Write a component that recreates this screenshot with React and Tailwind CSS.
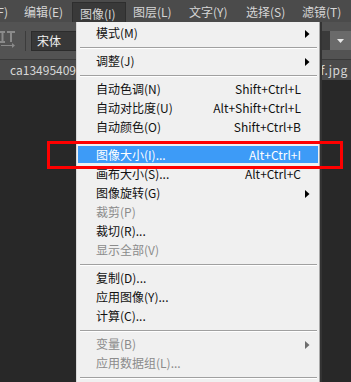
const items = [
  { t: '模式(M)', arrow: true },
  'sep',
  { t: '调整(J)', arrow: true },
  'sep',
  { t: '自动色调(N)', k: 'Shift+Ctrl+L' },
  { t: '自动对比度(U)', k: 'Alt+Shift+Ctrl+L' },
  { t: '自动颜色(O)', k: 'Shift+Ctrl+B' },
  'sep',
  { t: '图像大小(I)...', k: 'Alt+Ctrl+I', hi: true },
  { t: '画布大小(S)...', k: 'Alt+Ctrl+C' },
  { t: '图像旋转(G)', arrow: true },
  { t: '裁剪(P)', dis: true },
  { t: '裁切(R)...' },
  { t: '显示全部(V)', dis: true },
  'sep',
  { t: '复制(D)...' },
  { t: '应用图像(Y)...' },
  { t: '计算(C)...' },
  'sep',
  { t: '变量(B)', dis: true, arrow: true },
  { t: '应用数据组(L)...', dis: true },
  'sep',
];

function Arrow({ dis }) {
  return (
    <svg width="5" height="8" viewBox="0 0 5 8" className="absolute right-[9px] top-1/2 -translate-y-1/2">
      <path d="M0 0 L4.5 4 L0 8 Z" fill={dis ? '#6d6d6d' : '#000'} />
    </svg>
  );
}

function MenuRow({ it }) {
  if (it === 'sep') {
    return (
      <div className="h-[9px] flex flex-col">
        <div className="h-[4px]" />
        <div className="h-px bg-[#a0a0a0] ml-[2px] mr-[2px]" />
        <div className="h-px bg-white ml-[2px] mr-[2px]" />
      </div>
    );
  }
  const color = it.hi ? 'text-white' : it.dis ? 'text-[#8b8b8b]' : 'text-[#111]';
  return (
    <div className="h-[19px] relative">
      <div
        className={
          'absolute left-0 right-[1px] top-0 h-[17px] flex items-center justify-between pl-[18px] pr-[17px] ' +
          (it.hi ? 'bg-[#3d9bf7] ' : '') +
          color
        }
      >
        <span className="whitespace-nowrap leading-none">{it.t}</span>
        {it.k && <span className="whitespace-nowrap leading-none">{it.k}</span>}
      </div>
      {it.arrow && <Arrow dis={it.dis} />}
    </div>
  );
}

const barItems = [
  { t: '编辑(E)', w: 'w-[55px]' },
  { t: '图像(I)', w: 'w-[54px]', active: true },
  { t: '图层(L)', w: 'w-[56px]' },
  { t: '文字(Y)', w: 'w-[57px]' },
  { t: '选择(S)', w: 'w-[56px]' },
  { t: '滤镜(T)', w: 'w-[56px]' },
];

export default function App() {
  return (
    <div className="relative w-[351px] h-[382px] overflow-hidden bg-[#282828] text-[12px] font-['Noto_Sans_CJK_SC','Noto_Sans',sans-serif]">
      {/* menu bar */}
      <div className="h-[22px] bg-[#4b4b4b] flex text-[#d6d6d6]">
        <div className="w-[21px] flex justify-end items-center pr-[9px] pt-[2px] overflow-hidden">
          <span className="whitespace-nowrap">文件(F)</span>
        </div>
        {barItems.map((b) => (
          <div
            key={b.t}
            className={
              b.w +
              ' shrink-0 flex items-center pl-[7px] pt-[2px] whitespace-nowrap ' +
              (b.active ? 'bg-[#393939] border border-b-0 border-[#2e2e2e] mt-[2px] pt-0' : '')
            }
          >
            {b.t}
          </div>
        ))}
      </div>
      {/* options bar */}
      <div className="h-[38px] bg-[#535353] border-b border-[#3a3a3a] flex items-center">
        <svg width="18" height="20" viewBox="0 0 18 20" className="ml-[-1px] mt-[-4px]">
          <g stroke="#8a8a8a" strokeWidth="2" fill="none">
            <path d="M1 3 H6 M3.5 3 V13 M1 13 H6" />
            <path d="M8 3 H16 M12 3 V13" />
            <path d="M2 16.5 H14" strokeWidth="1" />
          </g>
          <path d="M13 14 L16 16.5 L13 19 Z" fill="#8a8a8a" />
        </svg>
        <div className="w-px h-[20px] bg-[#3c3c3c] ml-[8px] mr-[5px]" />
        <div className="h-[20px] w-[60px] bg-[#383838] border border-[#2c2c2c] flex items-center pl-[5px] text-[#f0f0f0]">
          宋体
        </div>
        <div className="ml-auto flex items-center h-[19px]">
          <div className="w-[10px] h-[19px] bg-[#3a3a3a]" />
          <div className="w-[21px] h-[19px] bg-[#6a6a6a] flex items-center justify-center">
            <svg width="7" height="4" viewBox="0 0 7 4">
              <path d="M0 0 H7 L3.5 4 Z" fill="#e8e8e8" />
            </svg>
          </div>
        </div>
      </div>
      {/* tabs row */}
      <div className="h-[20px] bg-[#4a4a4a] flex items-center justify-between text-[#d8d8d8] pl-[10px] pr-[3px]">
        <span>ca13495409</span>
        <span className="tracking-[0.6px]">0f.jpg</span>
      </div>

      {/* dropdown menu */}
      <div className="absolute left-[76px] top-[22px] w-[244px] bottom-0 bg-[#f0f0f0] border-l border-[#d8d8d8] border-r border-r-[#a8a8a8] shadow-[2px_0_0_#333333] pl-px pt-[2px]">
        {items.map((it, i) => (
          <MenuRow key={i} it={it} />
        ))}
      </div>

      {/* red annotation box */}
      <div className="absolute left-[47px] top-[141px] w-[296px] h-[28px] border-[3px] border-[#ff0000]" />
    </div>
  );
}
